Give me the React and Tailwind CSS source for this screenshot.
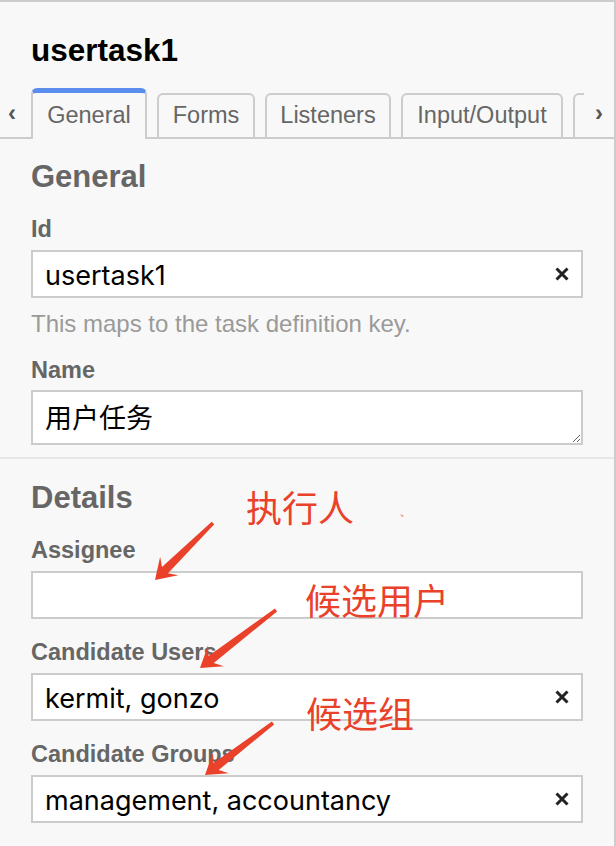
const sans = "font-['Liberation_Sans',Arial,sans-serif]";
const fieldFont = "font-['Inter','Noto_Sans_CJK_SC',sans-serif]";

const tabs = [
  { label: "General", width: "w-[116px]", active: true },
  { label: "Forms", width: "w-[98px]" },
  { label: "Listeners", width: "w-[126px]" },
  { label: "Input/Output", width: "w-[162px]" },
  // only the left edge of the next tab peeks out of the strip
  { label: "", width: "w-[140px]" },
];

// polygon for a hand-drawn style arrow, tail -> tip
const arrowPoints = (tail, tip) => {
  const dx = tip[0] - tail[0];
  const dy = tip[1] - tail[1];
  const len = Math.hypot(dx, dy);
  const ux = dx / len;
  const uy = dy / len;
  const nx = -uy;
  const ny = ux;
  const p = (along, side) => [
    tip[0] - ux * along + nx * side,
    tip[1] - uy * along + ny * side,
  ];
  return [
    p(len, 1.8),
    p(14, 4.3),
    p(20, 13),
    tip,
    p(20, -13),
    p(14, -4.3),
    p(len, -1.8),
  ]
    .map((pt) => pt.join(","))
    .join(" ");
};

const ClearIcon = () => (
  <svg
    width="14"
    height="14"
    viewBox="0 0 14 14"
    className="absolute right-[14px] top-[17px]"
  >
    <path d="M1.5 1.5L12.5 12.5M12.5 1.5L1.5 12.5" stroke="#222" strokeWidth="3" />
  </svg>
);

const Label = ({ children, className = "" }) => (
  <div className={`text-[23.5px] leading-[24px] font-bold text-[#666] ${className}`}>
    {children}
  </div>
);

const TextField = ({ value, clearable = true }) => (
  <div className="relative mt-[9px]">
    <input
      readOnly
      value={value}
      className={`${fieldFont} block w-full h-[48px] border-2 border-[#cccccc] bg-white pl-[12px] pr-[40px] pt-[3px] text-[27px] text-black outline-none`}
    />
    {clearable && value && <ClearIcon />}
  </div>
);

const Heading = ({ children }) => (
  <h2 className="text-[31px] leading-[31px] font-bold text-[#666]">{children}</h2>
);

const App = () => {
  return (
    <div className={`relative w-[616px] h-[846px] overflow-hidden ${sans}`}>
      <div className="w-[616px] h-[846px] bg-[#f8f8f8] border-t-2 border-r-2 border-[#cccccc]">
        <div className="pl-[31px] pt-[33px]">
          <h1 className="text-[31.5px] leading-[31px] font-bold text-black">usertask1</h1>
        </div>

        <div className="mt-[22px] flex h-[51px] border-b-2 border-[#cccccc]">
          <div className="w-[31px] shrink-0 flex items-center pl-[8px] text-[24px] leading-[24px] font-bold text-[#555]">
            ‹
          </div>
          <div className="w-[553px] h-[51px] shrink-0 overflow-hidden flex items-end gap-[10px]">
            {tabs.map((tab, i) =>
              tab.active ? (
                <div
                  key={i}
                  className={`${tab.width} shrink-0 h-[51px] border-x-2 border-t-[5px] border-x-[#cccccc] border-t-[#5b8def] rounded-t-[6px] bg-[#f8f8f8] pt-[2px] text-center text-[23.5px] leading-[40px] text-[#666]`}
                >
                  {tab.label}
                </div>
              ) : (
                <div
                  key={i}
                  className={`${tab.width} shrink-0 h-[44px] mb-[2px] border-2 border-b-0 border-[#cccccc] rounded-t-[6px] text-center text-[23.5px] leading-[40px] text-[#666]`}
                >
                  {tab.label}
                </div>
              )
            )}
          </div>
          <div className="flex-1 flex items-center justify-center text-[24px] leading-[24px] font-bold text-[#555]">
            ›
          </div>
        </div>

        <section className="px-[31px] pt-[22px] pb-[12px] border-b-2 border-[#e6e6e6]">
          <Heading>General</Heading>
          <Label className="mt-[25px]">Id</Label>
          <TextField value="usertask1" />
          <p className="mt-[14px] text-[24px] leading-[24px] text-[#9a9a9a]">
            This maps to the task definition key.
          </p>
          <Label className="mt-[22px]">Name</Label>
          <textarea
            readOnly
            value="用户任务"
            className={`${fieldFont} block mt-[8px] w-full h-[55px] border-2 border-[#cccccc] bg-white px-[12px] pt-[10px] text-[27px] leading-[34px] text-black outline-none`}
          />
        </section>

        <section className="px-[31px] pt-[23px]">
          <Heading>Details</Heading>
          <Label className="mt-[25px]">Assignee</Label>
          <TextField value="" />
          <Label className="mt-[21px]">Candidate Users</Label>
          <TextField value="kermit, gonzo" />
          <Label className="mt-[21px]">Candidate Groups</Label>
          <TextField value="management, accountancy" />
        </section>
      </div>

      {/* red annotations drawn over the panel */}
      <svg
        width="616"
        height="846"
        className="absolute left-0 top-0 pointer-events-none"
      >
        <polygon points={arrowPoints([213, 523], [155, 580])} fill="#e9412a" />
        <polygon points={arrowPoints([276, 610], [200, 668])} fill="#e9412a" />
        <polygon points={arrowPoints([273, 723], [205, 775])} fill="#e9412a" />
        <path d="M400 514 L404 516 L402 517 Z" fill="#e9412a" opacity="0.6" />
      </svg>
      <div className="absolute left-[246px] top-[488px] text-[36px] leading-[36px] text-[#e9412a] font-['Noto_Sans_CJK_SC',sans-serif] pointer-events-none">
        执行人
      </div>
      <div className="absolute left-[305px] top-[581px] text-[36px] leading-[36px] text-[#e9412a] font-['Noto_Sans_CJK_SC',sans-serif] pointer-events-none">
        候选用户
      </div>
      <div className="absolute left-[306px] top-[694px] text-[36px] leading-[36px] text-[#e9412a] font-['Noto_Sans_CJK_SC',sans-serif] pointer-events-none">
        候选组
      </div>
    </div>
  );
};

export default App;
